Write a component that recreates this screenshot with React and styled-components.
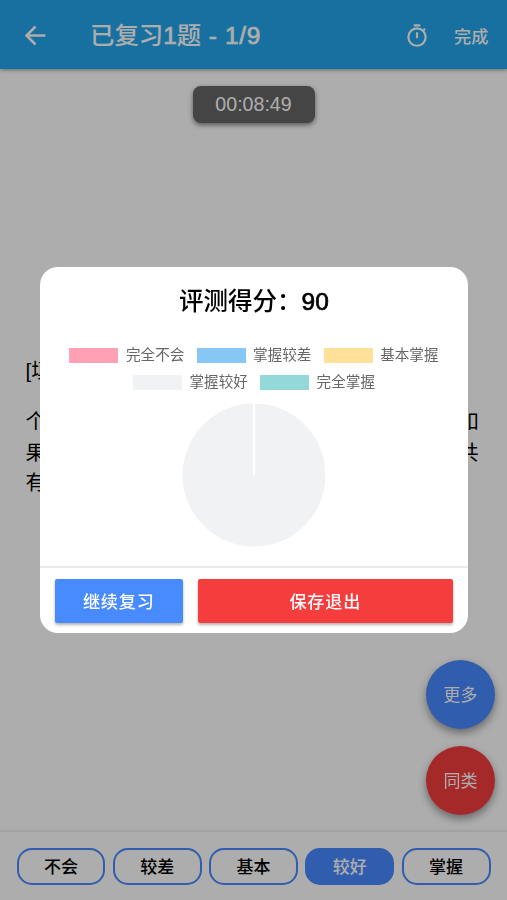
import styled, { createGlobalStyle } from "styled-components";

const GlobalStyle = createGlobalStyle`
  * {
    box-sizing: border-box;
  }
  body {
    margin: 0;
    font-family: "Liberation Sans", "Noto Sans CJK SC", sans-serif;
    color: #000;
  }
  button {
    font-family: inherit;
    padding: 0;
    border: 0;
  }
`;

const Page = styled.div`
  display: flex;
  flex-direction: column;
  width: 100%;
  height: 100vh;
  overflow: hidden;
  background-color: #fff;
`;

const Header = styled.header`
  display: flex;
  align-items: center;
  flex: none;
  height: 69px;
  padding: 2px 18.5px 0 22px;
  color: #fff;
  background-color: #23a6eb;
  box-shadow: 0 1px 4px rgba(0, 0, 0, 0.4);
`;

const HeaderTitle = styled.h1`
  flex: 1;
  margin: 0 0 0 41px;
  font-size: 24.4px;
  font-weight: 500;
  line-height: 36px;
  white-space: nowrap;
`;

// Liberation Sans has no medium weight, so the digits get a thin stroke
const Digits = styled.span`
  letter-spacing: ${(props) => props.$spacing || 0};
  -webkit-text-stroke: 0.7px currentColor;
`;

const DoneButton = styled.button`
  margin: -1px 0 0 24px;
  font-size: 17.2px;
  font-weight: 500;
  color: #fff;
  background: none;
`;

const Content = styled.main`
  display: flex;
  flex-direction: column;
  flex: 1;
  padding: 17px 26px 0;
`;

const Timer = styled.div`
  align-self: center;
  width: 122px;
  height: 37px;
  border-radius: 8px;
  font-size: 19.6px;
  line-height: 37px;
  text-align: center;
  color: #fff;
  background-color: #666;
  box-shadow: 0 2px 5px rgba(0, 0, 0, 0.5);
`;

const Question = styled.div`
  margin: 233px 0 0 -0.5px;
  font-size: 20.6px;
  line-height: 30.6px;
  white-space: nowrap;
`;

const QuestionText = styled.p`
  margin: 0 0 20.5px;
`;

const Footer = styled.footer`
  display: flex;
  gap: 7.3px;
  flex: none;
  height: 69px;
  padding: 16px 16.5px 0;
  border-top: 1px solid #eee;
  box-shadow: 0 -1px 2px rgba(0, 0, 0, 0.08);
`;

const Chip = styled.button`
  flex: 1;
  height: 37px;
  padding-bottom: 2px;
  border: 2.4px solid #488aff;
  border-radius: 15px;
  font-size: 17px;
  font-weight: 500;
  color: ${(props) => (props.$active ? "#fff" : "#000")};
  background-color: ${(props) => (props.$active ? "#488aff" : "transparent")};
`;

const FabList = styled.div`
  position: fixed;
  right: 12px;
  bottom: 85px;
  display: flex;
  flex-direction: column;
  gap: 17px;
`;

const Fab = styled.button`
  width: 69px;
  height: 69px;
  padding-bottom: 3px;
  border-radius: 50%;
  font-size: 17px;
  color: #fff;
  background-color: ${(props) => props.$color};
  box-shadow: 0 4px 8px rgba(0, 0, 0, 0.4);
`;

const Backdrop = styled.div`
  position: fixed;
  inset: 0;
  display: flex;
  align-items: center;
  justify-content: center;
  background-color: rgba(0, 0, 0, 0.32);
`;

const Modal = styled.section`
  display: flex;
  flex-direction: column;
  width: 428px;
  height: 366px;
  margin-left: 1px;
  border-radius: 18px;
  overflow: hidden;
  background-color: #fff;
`;

const ModalTitle = styled.h2`
  margin: 17px 0 0;
  font-size: 24.5px;
  font-weight: 500;
  line-height: 36px;
  text-align: center;
`;

const Legend = styled.div`
  display: flex;
  flex-wrap: wrap;
  justify-content: center;
  gap: 0 12.2px;
  margin: 22px 24px 0;
`;

const LegendItem = styled.div`
  display: flex;
  align-items: center;
  gap: 7.5px;
  height: 27px;
  font-size: 14.6px;
  line-height: 27px;
  color: #666;
`;

const Swatch = styled.span`
  width: 49px;
  height: 15px;
  background-color: ${(props) => props.$color};
`;

const Chart = styled.svg`
  display: block;
  align-self: center;
  width: 144px;
  height: 144px;
  margin-top: 7px;
`;

const ModalActions = styled.div`
  display: flex;
  gap: 14.5px;
  margin-top: auto;
  height: 67px;
  padding: 10.5px 15px 10.5px 14.5px;
  border-top: 2px solid #ebebeb;
`;

const ModalButton = styled.button`
  flex: ${(props) => props.$grow};
  height: 44px;
  padding-bottom: 1px;
  border-radius: 2px;
  font-size: 17.1px;
  font-weight: 500;
  letter-spacing: 0.8px;
  color: #fff;
  background-color: ${(props) => props.$color};
  box-shadow: 0 2px 3px rgba(0, 0, 0, 0.3);
`;

const levels = [
  { label: "完全不会", color: "#ffa0b4" },
  { label: "掌握较差", color: "#86c7f3" },
  { label: "基本掌握", color: "#ffe199" },
  { label: "掌握较好", color: "#f0f2f4" },
  { label: "完全掌握", color: "#93d9d9" },
];

const chips = ["不会", "较差", "基本", "较好", "掌握"];

function BackIcon() {
  return (
    <svg width="27" height="27" viewBox="0 0 24 24" fill="none">
      <path
        d="M20.8 12H4.5M12 4L4 12l8 8"
        stroke="currentColor"
        strokeWidth="2.2"
      />
    </svg>
  );
}

function StopwatchIcon() {
  return (
    <svg width="26" height="26" viewBox="0 0 24 24" fill="none">
      <g stroke="currentColor" strokeWidth="2">
        <circle cx="12" cy="13" r="8" />
        <path d="M9 2.2h6M12 8.5v5.5M17.8 7l1.6-1.6" />
      </g>
    </svg>
  );
}

function App() {
  return (
    <>
      <GlobalStyle />
      <Page>
        <Header>
          <BackIcon />
          <HeaderTitle>
            已复习<Digits>1</Digits>题<Digits $spacing="0.7px"> - 1/9</Digits>
          </HeaderTitle>
          <StopwatchIcon />
          <DoneButton>完成</DoneButton>
        </Header>
        <Content>
          <Timer>00:08:49</Timer>
          <Question>
            <QuestionText>[填空题]</QuestionText>
            <QuestionText>
              个班的同学一起去公园里划船他们算了一下发现如
              <br />
              果增加一条船那么正好每条船坐六人请问这个班共
              <br />
              有多少
            </QuestionText>
          </Question>
        </Content>
        <Footer>
          {chips.map((chip) => (
            <Chip key={chip} $active={chip === "较好"}>
              {chip}
            </Chip>
          ))}
        </Footer>
      </Page>
      <FabList>
        <Fab $color="#488aff">更多</Fab>
        <Fab $color="#f53d3d">同类</Fab>
      </FabList>
      <Backdrop>
        <Modal>
          <ModalTitle>
            评测得分：<Digits>90</Digits>
          </ModalTitle>
          <Legend>
            {levels.map((level) => (
              <LegendItem key={level.label}>
                <Swatch $color={level.color} />
                {level.label}
              </LegendItem>
            ))}
          </Legend>
          <Chart viewBox="0 0 144 144">
            <circle cx="72" cy="72" r="71.5" fill="#f0f2f4" />
            <path d="M72 0v72" stroke="#fff" strokeWidth="2.4" />
          </Chart>
          <ModalActions>
            <ModalButton $grow="0 0 128.5px" $color="#488aff">
              继续复习
            </ModalButton>
            <ModalButton $grow="1" $color="#f53d3d">
              保存退出
            </ModalButton>
          </ModalActions>
        </Modal>
      </Backdrop>
    </>
  );
}

export default App;
